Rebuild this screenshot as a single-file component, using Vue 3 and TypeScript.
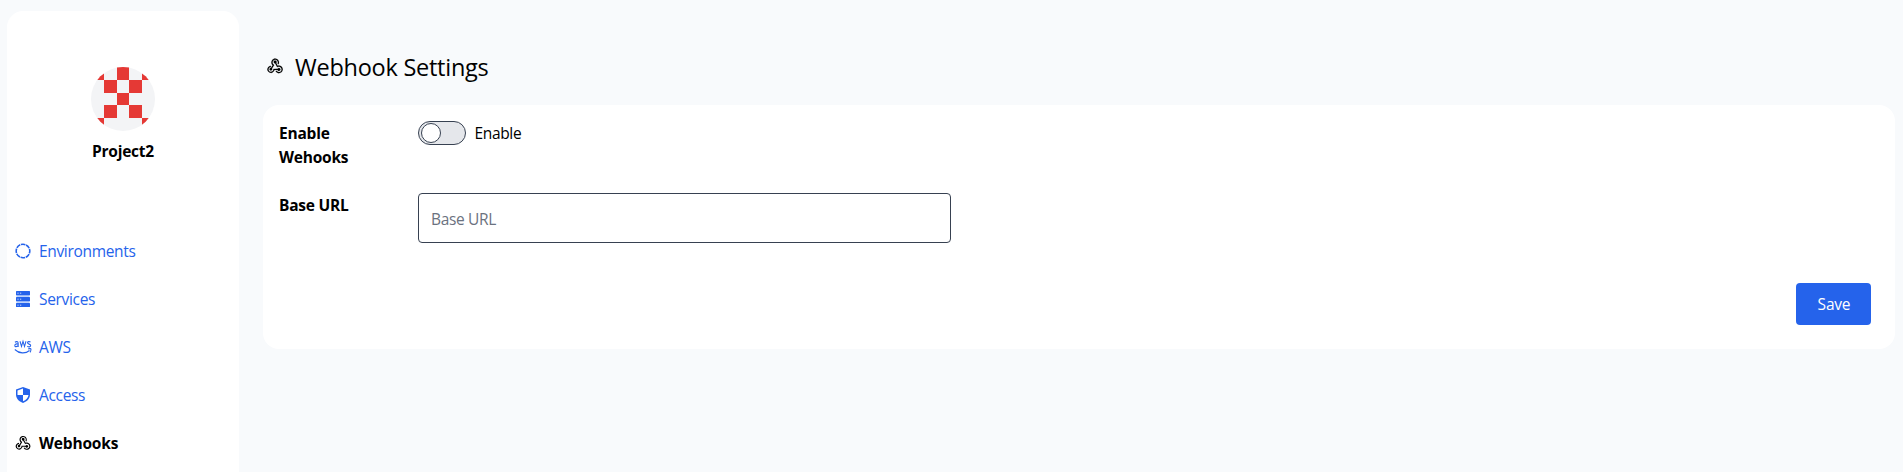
<script setup lang="ts">
import { ref } from 'vue'

interface NavItem {
  id: string
  label: string
  active?: boolean
}

const items: NavItem[] = [
  { id: 'environments', label: 'Environments' },
  { id: 'services', label: 'Services' },
  { id: 'aws', label: 'AWS' },
  { id: 'access', label: 'Access' },
  { id: 'webhooks', label: 'Webhooks', active: true },
]

const enabled = ref(false)
const baseUrl = ref('')

const webhookPath =
  'M10.46 19a4.6 4.6 0 0 1-6.37 1.15 4.63 4.63 0 0 1-1.17-6.38A4.57 4.57 0 0 1 6.5 11.8l.05 1.43c-.95.09-1.86.59-2.44 1.43-1.02 1.46-.67 3.43.76 4.43 1.44 1 3.42.62 4.43-.83.32-.45.49-.95.55-1.46v-1.01l5.58-.04.07-.11c.53-.92 1.69-1.23 2.61-.71a1.92 1.92 0 0 1 .69 2.61c-.53.91-1.7 1.23-2.61.7-.42-.23-.71-.6-.85-1.01l-4.07.02a4.9 4.9 0 0 1-.81 1.75m7.28-7.61c2.78.34 4.76 2.86 4.42 5.61-.34 2.77-2.87 4.73-5.66 4.39a4.98 4.98 0 0 1-3.69-2.44l1.24-.72a3.55 3.55 0 0 0 2.57 1.68c1.99.24 3.76-1.14 3.99-3.06s-1.17-3.68-3.14-3.92c-.61-.07-1.21.01-1.75.2l-.85.39-2.58-4.77h-.22a1.92 1.92 0 0 1-1.82-2c.03-1.05.95-1.87 2.01-1.83 1.06.06 1.91.94 1.87 2-.02.44-.19.84-.46 1.15l1.9 3.51c.67-.2 1.41-.28 2.17-.19M7.62 9.35C6.5 6.77 7.66 3.79 10.2 2.69c2.55-1.1 5.51.1 6.63 2.68.65 1.5.53 3.14-.19 4.48l-1.24-.72c.47-.95.52-2.1.06-3.16-.78-1.8-2.84-2.64-4.59-1.88-1.76.76-2.54 2.83-1.76 4.63.32.75.86 1.34 1.52 1.72l.37.2-2.9 4.71c.05.1.12.21.16.35.27.93-.27 1.91-1.21 2.18a1.77 1.77 0 0 1-2.2-1.19c-.27-.96.28-1.95 1.21-2.2.26-.1.53-.1.79-.06l2-3.3a4.8 4.8 0 0 1-1.23-1.78Z'
</script>

<template>
  <div class="page">
    <aside class="sidebar">
      <div class="project">
        <svg class="avatar" viewBox="0 0 5 5" shape-rendering="crispEdges">
          <path fill="#e53935" d="M0 0h1v1h-1zM2 0h1v1h-1zM4 0h1v1h-1zM1 1h1v1h-1zM3 1h1v1h-1zM2 2h1v1h-1zM1 3h1v1h-1zM3 3h1v1h-1zM0 4h1v1h-1zM4 4h1v1h-1z" />
        </svg>
        <div class="project-name"><span>Project2</span></div>
      </div>
      <nav>
        <a v-for="item in items" :key="item.id" class="nav-item" :class="{ active: item.active }">
          <svg v-if="item.id === 'environments'" class="icon" viewBox="0 0 16 16">
            <circle cx="8" cy="8" r="6.8" fill="none" stroke="currentColor" stroke-width="1.6" pathLength="80" stroke-dasharray="8.600 1.400" stroke-dashoffset="4" />
          </svg>
          <svg v-else-if="item.id === 'services'" class="icon" viewBox="0 0 16 16">
            <path fill="#bfd3fb" d="M1.500 4h13v9h-13z" />
            <rect x="1" y="0" width="14" height="4.200" rx=".5" fill="currentColor" />
            <rect x="1" y="6" width="14" height="4.200" rx=".5" fill="currentColor" />
            <rect x="1" y="12" width="14" height="4" rx=".5" fill="currentColor" />
            <path stroke="#fff" stroke-width=".9" d="M2.500 2.200h1M5.200 2.200h1M2.500 8.200h1M5.200 8.200h1M2.500 14.200h1M5.200 14.200h1" />
          </svg>
          <svg v-else-if="item.id === 'aws'" class="icon aws" viewBox="0 0 18 16">
            <g fill="none" stroke="currentColor" stroke-width="1" transform="matrix(1 0 0 1.250 0 -.7)">
              <path d="M.9 3.100c1.300-.8 3.300-.8 3.300.8v3M4.200 4.700C2.500 4.300.8 4.500.8 5.700c0 1.500 2.500 1.200 3.400 0" />
              <path d="M6 2.400l1.500 4.100 1.500-4.100 1.500 4.100 1.500-4.100" />
              <path d="M16.500 3c-1-.6-3-.5-3 .6 0 1.300 3.200.8 3.200 2.200 0 1.300-2.300 1.100-3.400.5" />
              <path d="M.8 9c4.400 3.500 10.800 3.500 14.700.8M14.200 8.500c1.800-.4 3-.2 2.800.5-.1.900-.5 1.700-1 2.300" />
            </g>
          </svg>
          <svg v-else-if="item.id === 'access'" class="icon" viewBox="0 0 16 16">
            <path fill="currentColor" d="M8 0l7 2.600v4.900c0 4-2.800 7-7 8.500-4.200-1.500-7-4.500-7-8.500V2.600z" />
            <path fill="#fff" d="M8 1.600V8H2.500V3.600zM8 8h5.500c-.4 3-2.500 5.100-5.500 6.300z" />
          </svg>
          <svg v-else class="icon" viewBox="1 1 22 22"><path fill="currentColor" :d="webhookPath" /></svg>
          <span>{{ item.label }}</span>
        </a>
      </nav>
    </aside>

    <main>
      <h1>
        <svg class="title-icon" viewBox="1.500 1.500 21 21"><path fill="currentColor" stroke="currentColor" stroke-width=".2" :d="webhookPath" /></svg>
        <span>Webhook Settings</span>
      </h1>
      <form class="card" @submit.prevent>
        <div class="row">
          <div class="field-label">Enable Wehooks</div>
          <button type="button" class="toggle" :class="{ on: enabled }" @click="enabled = !enabled"><span class="knob"></span></button>
          <span class="toggle-text">Enable</span>
        </div>
        <div class="row">
          <div class="field-label">Base URL</div>
          <input v-model="baseUrl" type="text" placeholder="Base URL" />
        </div>
        <div class="actions"><button type="submit" class="save">Save</button></div>
      </form>
    </main>
  </div>
</template>

<style>
body {
  margin: 0;
  overflow: hidden;
  background: #f8fafc;
}
</style>

<style scoped>
* {
  box-sizing: border-box;
}
.page {
  display: flex;
  gap: 24px;
  height: 472px;
  padding: 11px 8px 0 7px;
  overflow: hidden;
  background: #f8fafc;
  color: #000;
  font: 15.5px/24px 'Open Sans', 'Noto Sans', sans-serif;
}
.sidebar {
  flex: none;
  width: 232px;
  height: 540px;
  border-radius: 16px;
  background: #fff;
}
.project {
  display: flex;
  flex-direction: column;
  align-items: center;
  height: 216px;
  padding-top: 56px;
}
.avatar {
  width: 64px;
  height: 64px;
  border-radius: 50%;
  background: #f3f4f6;
}
.project-name {
  margin-top: 8px;
  font-weight: 700;
  letter-spacing: -0.25px;
}
.nav-item {
  display: flex;
  align-items: center;
  gap: 8px;
  height: 48px;
  padding-left: 8px;
  color: #2563eb;
  letter-spacing: -0.33px;
}
.nav-item.active {
  color: #000;
  font-weight: 700;
  letter-spacing: -0.18px;
}
.icon {
  flex: none;
  width: 16px;
  height: 16px;
}
.aws {
  width: 18px;
  margin: 0 -1px;
}
main {
  flex: 1;
}
h1 {
  display: flex;
  align-items: center;
  height: 32px;
  margin: 40px 0 22px;
  padding-left: 4px;
  font-size: 23.5px;
  font-weight: 400;
  line-height: 32px;
  letter-spacing: -0.25px;
}
.title-icon {
  width: 16px;
  height: 16px;
  margin: -2px 12px 0 0;
}
.card {
  height: 244px;
  padding: 16px 24px 0 16px;
  border-radius: 16px;
  background: #fff;
}
.row {
  display: flex;
  align-items: flex-start;
  height: 72px;
}
.field-label {
  width: 100px;
  margin-right: 39px;
  font-weight: 700;
  letter-spacing: -0.22px;
}
.toggle {
  width: 48px;
  height: 24px;
  padding: 1px 2px;
  border: 1px solid #374151;
  border-radius: 12px;
  background: #e5e7eb;
}
.knob {
  display: block;
  width: 20px;
  height: 20px;
  border: 1px solid #374151;
  border-radius: 50%;
  background: #fff;
}
.toggle.on {
  background: #2563eb;
}
.on .knob {
  margin-left: 22px;
}
.toggle-text {
  margin-left: 8.5px;
  letter-spacing: -0.35px;
}
input {
  width: 533px;
  height: 50px;
  padding: 2px 12px 0;
  border: 1px solid #374151;
  border-radius: 4px;
  outline: none;
  color: #000;
  font: inherit;
  letter-spacing: -0.35px;
}
input::placeholder {
  color: #6b7280;
}
.actions {
  display: flex;
  justify-content: flex-end;
  margin-top: 18px;
}
.save {
  width: 75px;
  height: 42px;
  padding: 0 0 0 1px;
  border: 0;
  border-radius: 4px;
  background: #2563eb;
  color: #fff;
  font: inherit;
  letter-spacing: -0.2px;
}
</style>
